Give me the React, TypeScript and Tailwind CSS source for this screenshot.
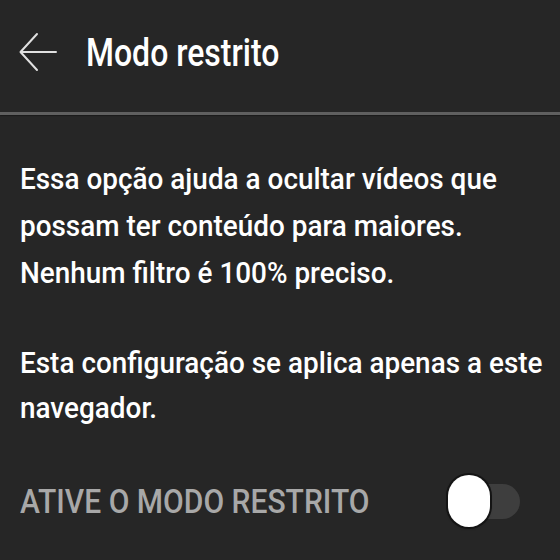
import React from "react";

const font = { fontFamily: "Roboto, 'Liberation Sans', sans-serif" };

export default function App() {
  return (
    <div
      className="w-[560px] h-[560px] bg-[#262626] text-white overflow-hidden flex flex-col"
      style={font}
    >
      <div className="h-[112px] flex items-center pl-[19px] pb-[6px]">
        <svg width="40" height="42" viewBox="0 0 40 42" className="shrink-0">
          <path
            d="M37 20 H2 M18 2 L1.5 20 L18 38"
            stroke="#e0e0e0"
            strokeWidth="2"
            fill="none"
            strokeLinecap="round"
            strokeLinejoin="round"
          />
        </svg>
        <div className="ml-[27px] text-[39px] leading-none font-medium whitespace-nowrap origin-left scale-x-[0.82]">
          Modo restrito
        </div>
      </div>
      <div className="h-[3px] bg-[#5f5f5f] shadow-[0_1px_1px_#1a1a1a]" />
      <div className="pl-[20px] pt-[40px] text-[30px] font-medium">
        <div className="leading-[47px] whitespace-nowrap origin-left scale-x-[0.93]">
          <div>Essa opção ajuda a ocultar vídeos que</div>
          <div>possam ter conteúdo para maiores.</div>
          <div>Nenhum filtro é 100% preciso.</div>
        </div>
        <div className="mt-[44px] leading-[45px] whitespace-nowrap origin-left scale-x-[0.93]">
          <div>Esta configuração se aplica apenas a este</div>
          <div>navegador.</div>
        </div>
      </div>
      <div className="flex items-center justify-between pl-[20px] pr-[40px] mt-[45px]">
        <div className="text-[33px] font-medium text-[#a8a8a8] whitespace-nowrap origin-left scale-x-[0.91] leading-none">
          ATIVE O MODO RESTRITO
        </div>
        <div className="relative w-[72px] h-[52px] flex items-center shrink-0">
          <div className="ml-[7px] w-[65px] h-[35px] rounded-full bg-[#3e3e3e]" />
          <div className="absolute left-0 top-0 w-[42px] h-[52px] rounded-full bg-white shadow-[0_0_0_2px_#141414,0_1px_3px_rgba(0,0,0,0.6)]" />
        </div>
      </div>
    </div>
  );
}
